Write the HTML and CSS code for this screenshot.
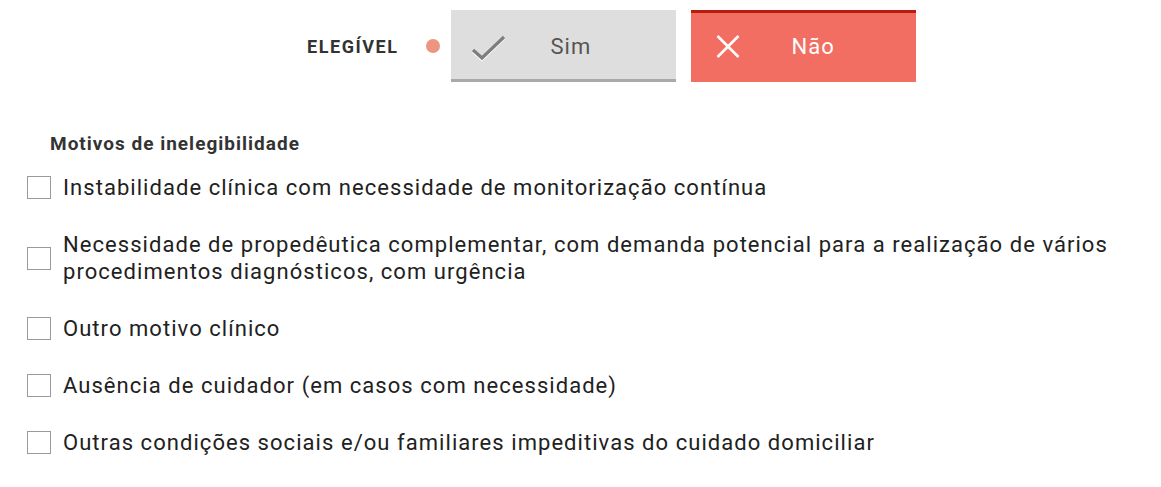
FILE: index.html
```html
<!DOCTYPE html>
<html lang="pt">
<head>
<meta charset="utf-8">
<link rel="stylesheet" href="styles.css">
</head>
<body>
<div class="page">
  <div class="elig-row">
    <span class="elig-label">ELEGÍVEL</span>
    <span class="dot"></span>
    <div class="choice choice-sim">
      <svg class="icon" width="42" height="42" viewBox="0 0 42 42">
        <polyline points="6,25 15,33 37,12" fill="none" stroke="#ffffff" stroke-width="3.2" transform="translate(0,1.2)"/>
        <polyline points="6,25 15,33 37,12" fill="none" stroke="#7e7e7e" stroke-width="3.2"/>
      </svg>
      <span class="choice-text">Sim</span>
    </div>
    <div class="choice choice-nao">
      <svg class="icon" width="42" height="42" viewBox="0 0 42 42">
        <line x1="9.5" y1="11" x2="30.5" y2="32" stroke="#ffffff" stroke-width="2.6"/>
        <line x1="30.5" y1="11" x2="9.5" y2="32" stroke="#ffffff" stroke-width="2.6"/>
      </svg>
      <span class="choice-text">Não</span>
    </div>
  </div>

  <div class="motivos">
    <h3 class="motivos-title">Motivos de inelegibilidade</h3>
    <ul class="opts">
      <li class="opt"><span class="box"></span><span class="opt-text">Instabilidade clínica com necessidade de monitorização contínua</span></li>
      <li class="opt"><span class="box"></span><span class="opt-text">Necessidade de propedêutica complementar, com demanda potencial para a realização de vários procedimentos diagnósticos, com urgência</span></li>
      <li class="opt"><span class="box"></span><span class="opt-text">Outro motivo clínico</span></li>
      <li class="opt"><span class="box"></span><span class="opt-text">Ausência de cuidador (em casos com necessidade)</span></li>
      <li class="opt"><span class="box"></span><span class="opt-text">Outras condições sociais e/ou familiares impeditivas do cuidado domiciliar</span></li>
    </ul>
  </div>
</div>
</body>
</html>
```

FILE: styles.css
```css
html, body {
  margin: 0;
  padding: 0;
  background: #ffffff;
}
body {
  font-family: Roboto, "Liberation Sans", Arial, sans-serif;
  color: #212121;
  letter-spacing: 1px;
}
.page {
  width: 1161px;
  height: 487px;
  box-sizing: border-box;
  padding-top: 10px;
}
.elig-row {
  display: flex;
  align-items: center;
  padding-left: 307px;
  height: 72px;
}
.elig-label {
  font-weight: 700;
  font-size: 18px;
  letter-spacing: 1.55px;
  color: #333333;
}
.dot {
  flex: none;
  width: 14px;
  height: 14px;
  border-radius: 50%;
  background: #ec9580;
  margin-left: 27px;
  margin-right: 11px;
}
.choice {
  flex: none;
  box-sizing: border-box;
  width: 225px;
  height: 72px;
  display: flex;
  align-items: center;
  padding-left: 16px;
}
.choice .icon {
  flex: none;
  display: block;
}
.choice-text {
  margin-left: 42px;
  font-size: 22px;
}
.choice-sim {
  background: #dedede;
  border-bottom: 3px solid #a9a9a9;
  padding-top: 3px;
}
.choice-sim .choice-text {
  color: #555555;
}
.choice-nao {
  margin-left: 15px;
  background: #f36e62;
  border-top: 3px solid #b71c0c;
  padding-bottom: 3px;
  padding-left: 17px;
}
.choice-nao .choice-text {
  color: #ffffff;
}
.motivos {
  padding-left: 27px;
  padding-top: 50px;
}
.motivos-title {
  margin: 0 0 0 23px;
  font-size: 19px;
  font-weight: 700;
  color: #333333;
  line-height: 24px;
  letter-spacing: 1px;
}
.opts {
  list-style: none;
  margin: 18px 0 0 0;
  padding: 0;
  display: flex;
  flex-direction: column;
  gap: 30px;
}
.opt {
  display: flex;
  align-items: center;
}
.box {
  flex: none;
  box-sizing: border-box;
  width: 24px;
  height: 23px;
  border: 1px solid #9a9a9a;
  background: #fff;
  margin-right: 12px;
}
.opt-text {
  font-size: 22px;
  line-height: 27px;
  letter-spacing: 1.05px;
  color: #212121;
  max-width: 1060px;
}
```
